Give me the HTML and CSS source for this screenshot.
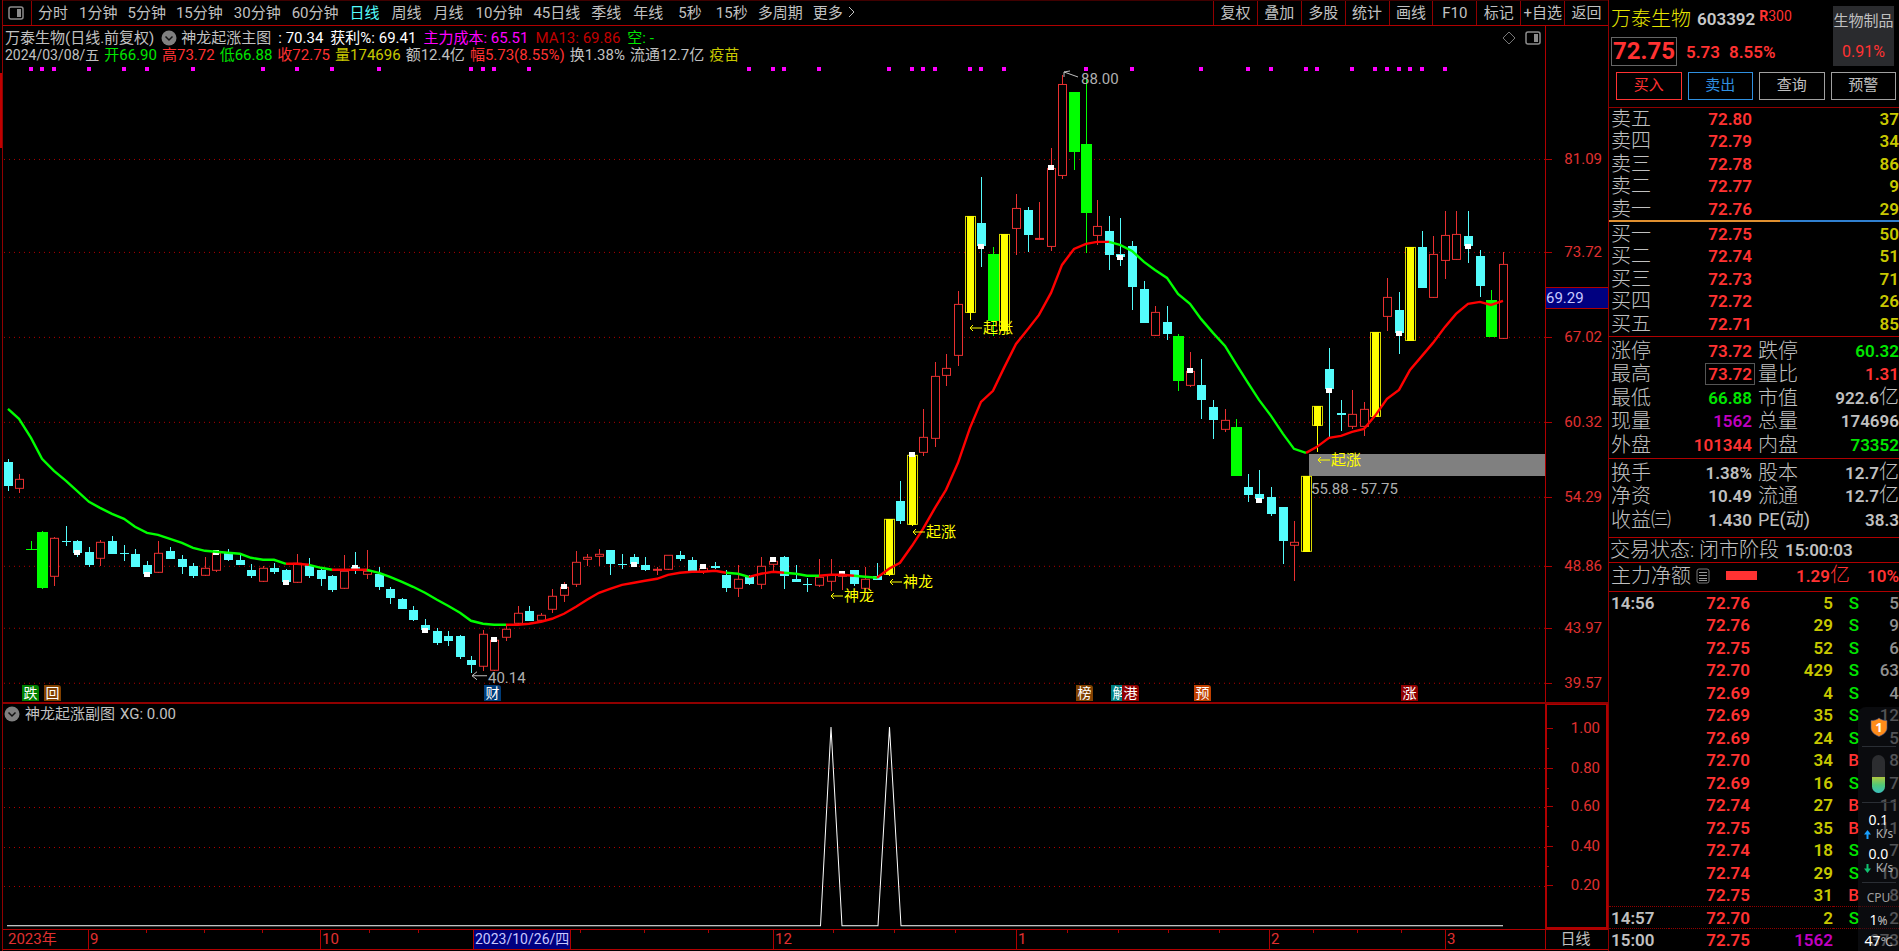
FILE: index.html
```html
<!DOCTYPE html>
<html lang="zh-CN">
<head>
<meta charset="utf-8">
<title>万泰生物 603392</title>
<link rel="stylesheet" href="styles.css">
</head>
<body>
<div class="app">
  <div class="rail"></div>
  <main class="chart">
    <header class="toolbar">
      <button class="menu" aria-label="侧栏"><svg width="16" height="14" viewBox="0 0 16 14"><rect x="1" y="1" width="14" height="12" rx="2" fill="none" stroke="#8c8c8c" stroke-width="1.5"/><rect x="9" y="3" width="4" height="8" fill="#8c8c8c"/></svg></button>
      <nav class="periods">
        <button>分时</button><button class="tight">1分钟</button><button class="tight">5分钟</button><button class="tight">15分钟</button><button>30分钟</button><button class="tight">60分钟</button><button class="active">日线</button><button>周线</button><button>月线</button><button>10分钟</button><button class="tight">45日线</button><button>季线</button><button>年线</button><button class="wide">5秒</button><button class="tight">15秒</button><button class="tight">多周期</button><button class="tight">更多<svg width="8" height="12" viewBox="0 0 8 12"><path d="M1 1L6 6L1 11" fill="none" stroke="#c0c0c0"/></svg></button>
      </nav>
      <nav class="tools">
        <button>复权</button><button>叠加</button><button>多股</button><button>统计</button><button>画线</button><button>F10</button><button>标记</button><button>+自选</button><button>返回</button>
      </nav>
    </header>
    <section class="pane main-pane">
      <div class="plot">
        <svg id="main" viewBox="3 26 1542 676" preserveAspectRatio="none"></svg>
        <div class="info">
          <p><span>万泰生物(日线.前复权)</span><svg class="round" width="16" height="16" viewBox="0 0 16 16"><circle cx="8" cy="8" r="7.5" fill="#808080"/><path d="M4.500 6.500L8 10L11.500 6.500" fill="none" stroke="#111" stroke-width="1.5"/></svg><span class="title">神龙起涨主图</span><span class="white">: 70.34</span><span class="white">获利%: 69.41</span><span class="magenta">主力成本: 65.51</span><span class="darkred">MA13: 69.86</span><span class="green">空: -</span></p>
          <p class="ohlc"><span class="date">2024/03/08/五</span><span class="green">开66.90</span><span class="red">高73.72</span><span class="green">低66.88</span><span class="red">收72.75</span><span class="yellow">量174696</span><span>额12.4亿</span><span class="red">幅5.73(8.55%)</span><span>换1.38%</span><span>流通12.7亿</span><span class="yellow">疫苗</span></p>
        </div>
        <div class="corner">
          <svg width="14" height="14" viewBox="0 0 14 14"><path d="M7 1L13 7L7 13L1 7Z" fill="none" stroke="#777"/></svg>
          <svg width="16" height="14" viewBox="0 0 16 14"><rect x="1" y="1" width="14" height="12" rx="2" fill="none" stroke="#8c8c8c" stroke-width="1.5"/><rect x="9" y="3" width="4" height="8" fill="#8c8c8c"/></svg>
        </div>
        <div class="labels" id="mainLabels"></div>
      </div>
      <div class="axis" id="mainAxis"></div>
    </section>
    <section class="pane sub-pane">
      <div class="plot">
        <svg id="sub" viewBox="3 704 1542 225" preserveAspectRatio="none"></svg>
        <div class="info sub-info"><p><svg class="round" width="16" height="16" viewBox="0 0 16 16"><circle cx="8" cy="8" r="7.5" fill="#808080"/><path d="M4.500 6.500L8 10L11.500 6.500" fill="none" stroke="#111" stroke-width="1.5"/></svg><span>神龙起涨副图</span><span>XG: 0.00</span></p></div>
      </div>
      <div class="axis boxed" id="subAxis"></div>
    </section>
    <footer class="times">
      <div class="timeline" id="timeline"></div>
      <div class="unit">日线</div>
    </footer>
  </main>
  <aside class="quote">
    <header class="head">
      <div class="ident"><h1>万泰生物</h1><b>603392</b><sup><b>R</b>300</sup></div>
      <div class="last"><strong>72.75</strong><span>5.73</span><span>8.55%</span></div>
      <div class="sector"><span>生物制品</span><em>0.91%</em></div>
      <div class="actions"><button class="buy">买入</button><button class="sell">卖出</button><button>查询</button><button>预警</button></div>
    </header>
    <table class="book asks">
      <tr><th>卖五</th><td class="red">72.80</td><td class="yellow">37</td></tr>
      <tr><th>卖四</th><td class="red">72.79</td><td class="yellow">34</td></tr>
      <tr><th>卖三</th><td class="red">72.78</td><td class="yellow">86</td></tr>
      <tr><th>卖二</th><td class="red">72.77</td><td class="yellow">9</td></tr>
      <tr><th>卖一</th><td class="red">72.76</td><td class="yellow">29</td></tr>
    </table>
    <div class="ratio"></div>
    <table class="book bids">
      <tr><th>买一</th><td class="red">72.75</td><td class="yellow">50</td></tr>
      <tr><th>买二</th><td class="red">72.74</td><td class="yellow">51</td></tr>
      <tr><th>买三</th><td class="red">72.73</td><td class="yellow">71</td></tr>
      <tr><th>买四</th><td class="red">72.72</td><td class="yellow">26</td></tr>
      <tr><th>买五</th><td class="red">72.71</td><td class="yellow">85</td></tr>
    </table>
    <table class="stats five">
      <tr><th>涨停</th><td class="red">73.72</td><th>跌停</th><td class="green">60.32</td></tr>
      <tr><th>最高</th><td class="red"><span class="framed">73.72</span></td><th>量比</th><td class="red">1.31</td></tr>
      <tr><th>最低</th><td class="green">66.88</td><th>市值</th><td>922.6<i>亿</i></td></tr>
      <tr><th>现量</th><td class="purple">1562</td><th>总量</th><td>174696</td></tr>
      <tr><th>外盘</th><td class="red">101344</td><th>内盘</th><td class="green">73352</td></tr>
    </table>
    <table class="stats three">
      <tr><th>换手</th><td>1.38%</td><th>股本</th><td>12.7<i>亿</i></td></tr>
      <tr><th>净资</th><td>10.49</td><th>流通</th><td>12.7<i>亿</i></td></tr>
      <tr><th>收益㈢</th><td>1.430</td><th><span class="pe">PE(动)</span></th><td>38.3</td></tr>
    </table>
    <div class="status"><span>交易状态: 闭市阶段</span><b>15:00:03</b></div>
    <div class="net"><span>主力净额</span><svg width="14" height="16" viewBox="0 0 14 16"><rect x="1" y="1" width="12" height="14" rx="2" fill="none" stroke="#777"/><path d="M3 4.500H11M3 7.500H11M3 10.500H11M3 12.500H11" stroke="#999"/></svg><div class="bar"></div><span class="amount red"><b>1.29</b>亿</span><b class="share red">10%</b></div>
    <div class="trades">
      <table>
        <tr><th>14:56</th><td>72.76</td><td>5</td><td class="s">S</td><td>5</td></tr>
        <tr><th></th><td>72.76</td><td>29</td><td class="s">S</td><td>9</td></tr>
        <tr><th></th><td>72.75</td><td>52</td><td class="s">S</td><td>6</td></tr>
        <tr><th></th><td>72.70</td><td>429</td><td class="s">S</td><td>63</td></tr>
        <tr><th></th><td>72.69</td><td>4</td><td class="s">S</td><td>4</td></tr>
        <tr><th></th><td>72.69</td><td>35</td><td class="s">S</td><td>12</td></tr>
        <tr><th></th><td>72.69</td><td>24</td><td class="s">S</td><td>5</td></tr>
        <tr><th></th><td>72.70</td><td>34</td><td class="b">B</td><td>8</td></tr>
        <tr><th></th><td>72.69</td><td>16</td><td class="s">S</td><td>7</td></tr>
        <tr><th></th><td>72.74</td><td>27</td><td class="b">B</td><td>11</td></tr>
        <tr><th></th><td>72.75</td><td>35</td><td class="b">B</td><td>11</td></tr>
        <tr><th></th><td>72.74</td><td>18</td><td class="s">S</td><td>7</td></tr>
        <tr><th></th><td>72.74</td><td>29</td><td class="s">S</td><td>10</td></tr>
        <tr><th></th><td>72.75</td><td>31</td><td class="b">B</td><td>8</td></tr>
        <tr class="minute"><th>14:57</th><td>72.70</td><td>2</td><td class="s">S</td><td>2</td></tr>
        <tr class="minute"><th>15:00</th><td>72.75</td><td class="purple">1562</td><td></td><td>373</td></tr>
      </table>
    </div>
    <div class="monitor">
      <svg class="shield" width="18" height="20" viewBox="0 0 18 20"><path d="M9 1C11 3 14 3.500 17 3.500V11C17 15 13 18 9 19.500C5 18 1 15 1 11V3.500C4 3.500 7 3 9 1Z" fill="#ff8c1a" stroke="#4a5a90" stroke-width=".6"/><text x="9" y="14.500" text-anchor="middle" fill="#fff" font-family="Open Sans" font-size="13" font-weight="bold">1</text></svg>
      <hr>
      <div class="pill"><div></div></div>
      <hr>
      <div class="rate"><b>0.1</b><span><svg width="7" height="9" viewBox="0 0 7 9"><path d="M3.500 0L7 4.500H4.500V9H2.500V4.500H0Z" fill="#18a0ff"/></svg>K/s</span></div>
      <div class="rate"><b>0.0</b><span><svg width="7" height="9" viewBox="0 0 7 9"><path d="M3.500 9L0 4.500H2.500V0H4.500V4.500H7Z" fill="#10c070"/></svg>K/s</span></div>
      <hr>
      <div class="cpu">CPU</div>
      <div class="load">1<small>%</small></div>
      <div class="temp">47<small>℃</small></div>
    </div>
  </aside>
</div>
<script src="chart.js"></script>
</body>
</html>
```
FILE: styles.css
```css
* { box-sizing: border-box; }
body {
  margin: 0;
  height: 100vh;
  overflow: hidden;
  background: #000;
  color: #c0c0c0;
  font: 15px/18px Roboto, "Noto Sans CJK SC", sans-serif;
}
button { margin: 0; padding: 0; border: 0; background: none; color: inherit; font: inherit; cursor: pointer; }
p, h1 { margin: 0; font: inherit; }
.white { color: #fff; }
.magenta { color: #f0f; }
.darkred { color: #c00000; }
.green { color: #00e600; }
.red { color: #ff3232; }
.yellow { color: #c8c800; }
.purple { color: #c000c0; }

.app { display: grid; grid-template-columns: 3px minmax(0, 1fr) 291px; height: 100vh; }
.rail { border-right: 1px solid #900000; background: linear-gradient(#000 73px, #c00000 73px, #c00000 148px, #000 148px); }
.chart { display: flex; flex-direction: column; min-width: 0; padding-bottom: 1px; }

.toolbar { display: flex; flex: none; height: 26px; border-top: 1px solid #400000; border-bottom: 1px solid #b00000; }
.menu { display: flex; align-items: center; width: 29px; padding-left: 5px; border-right: 1px solid #900000; }
.periods { display: flex; flex: 1; white-space: nowrap; }
.periods button { padding: 0 6px; }
.periods .active { color: #54fcfc; }
.periods .wide { padding: 0 9px; }
.periods .tight { padding: 0 5px; }
.periods svg { margin-left: 5px; }
.tools { display: grid; grid-template-columns: repeat(9, 1fr); width: 395px; }
.tools button { border-left: 1px solid #900000; }

.pane { display: grid; grid-template-columns: minmax(0, 1fr) 63px; min-height: 0; }
.main-pane { flex: 678; border-bottom: 2px solid #900000; }
.sub-pane { flex: 226; }
.plot { position: relative; min-height: 0; }
.plot > svg { position: absolute; width: 100%; height: 100%; display: block; }
.axis { position: relative; border-left: 1px solid #b00000; color: #e03030; }
.axis span { position: absolute; right: 6px; transform: translateY(-50%); }
.axis i { position: absolute; left: 0; width: 6px; height: 1px; background: #b00000; }
.axis i.minor { width: 2px; }
.axis .cursor { left: 0; right: 0; padding: 1px 0; border: 1px solid #b00000; border-width: 1px 0; background: #000080; color: #c8c8ff; }
.boxed { border: 2px solid #b00000; border-top-width: 1px; }

.info { position: absolute; left: 2px; top: 3px; white-space: nowrap; }
.info p { display: flex; align-items: center; gap: 7px; height: 17px; }
.info .ohlc { gap: 5px; }
.info .date { font-size: 14px; }
.info .title { margin-left: -3px; }
.sub-info { top: 2px; left: 1px; }
.sub-info p { gap: 5px; }
.corner { position: absolute; top: 5px; right: 4px; display: flex; gap: 9px; align-items: center; }
.labels span { position: absolute; display: flex; align-items: center; transform: translateY(-50%); white-space: nowrap; color: #b0b0b0; }
.labels .signal { color: #ff0; }
.labels .badge { justify-content: center; width: 17px; height: 16px; border-radius: 0 3px 0 0; color: #fff; font-size: 14px; }

.times { display: grid; grid-template-columns: minmax(0, 1fr) 63px; flex: none; height: 21px; border: 1px solid #b00000; border-width: 1px 0; color: #e03030; }
.timeline { position: relative; }
.timeline span { position: absolute; top: 0; bottom: 0; padding-left: 1px; border-left: 1px solid #b00000; white-space: nowrap; }
.timeline .first { border: 0; }
.timeline .cursor { padding: 0 1px; border-right: 1px solid #b00000; background: #000080; color: #c8c8ff; font-size: 14px; }
.timeline i { position: absolute; top: 0; width: 1px; height: 3px; background: #b00000; }
.unit { border-left: 1px solid #b00000; padding-right: 3px; color: #c0c0c0; text-align: center; }

.quote { position: relative; display: flex; flex-direction: column; border-left: 1px solid #900000; font-size: 17px; font-weight: 600; line-height: 20px; min-height: 0; overflow: hidden; }
.head { position: relative; display: flex; flex-direction: column; flex: none; height: 107px; padding: 7px 3px 0 2px; }
.ident { display: flex; align-items: center; gap: 6px; height: 24px; }
.ident h1 { color: #e6e600; font-size: 20px; font-weight: 300; }
.ident > b { color: #c8c8c8; font-weight: 600; }
.ident sup { margin-left: -2px; color: #ff3232; font-size: 14px; font-weight: 400; line-height: 18px; align-self: flex-start; }
.last { display: flex; align-items: center; gap: 9px; margin-top: 6px; color: #ff3232; }
.last strong { height: 29px; padding: 0 1px; border: 1px solid #666; font-size: 24px; font-weight: 700; line-height: 27px; }
.sector { position: absolute; top: 6px; right: 5px; display: flex; flex-direction: column; justify-content: space-between; width: 61px; height: 60px; padding: 5px 0 4px; background: #2a2b2e; font-size: 15px; font-weight: 400; text-align: center; }
.sector em { color: #ff3232; font-size: 16px; font-style: normal; }
.actions { display: grid; grid-template-columns: repeat(4, 1fr); gap: 6px; margin: 6px 0 0 5px; }
.actions button { height: 28px; padding-bottom: 2px; border: 1px solid #a0a0a0; font-size: 15px; font-weight: 400; }
.actions .buy { border-color: #ff3232; color: #ff3232; }
.actions .sell { border-color: #3090e0; color: #3090e0; }

table { width: 100%; border-collapse: collapse; table-layout: fixed; }
th, td { padding: 0; text-align: right; white-space: nowrap; line-height: 20px; overflow: visible; }
th { text-align: left; font-weight: 300; font-size: 20px; }
td i { font-size: 20px; font-style: normal; font-weight: 300; line-height: 18px; }
.book, .stats { flex: none; }
.book tr { height: 22px; }
.book tr:nth-child(even) { height: 23px; }
.book th { width: 80px; padding-left: 2px; }
.book td:nth-child(2) { width: 63px; }
.asks { border-top: 1px solid #900000; }
.bids { margin: 1px 0; }
.ratio { flex: none; height: 2px; background: linear-gradient(90deg, #e09030 59%, #3080d0 59%); }
.stats { padding-top: 2px; border-top: 1px solid #b00000; border-collapse: separate; border-spacing: 0; }
.stats tr { height: 24px; }
.stats tr:nth-child(even) { height: 23px; }
.five { margin-bottom: 1px; }
.three { margin-bottom: 5px; }
.stats th:first-child { width: 67px; padding-left: 2px; }
.stats td:nth-child(2) { width: 76px; }
.stats th:nth-child(3) { width: 50px; padding-left: 6px; }
.framed { display: inline-block; margin-right: -3px; padding: 0 2px; border: 1px solid #555; }
.pe { font-size: 18px; font-weight: 400; }
.status { display: flex; flex: none; align-items: center; gap: 6px; height: 25px; padding-left: 1px; border-top: 1px solid #b00000; font-size: 20px; font-weight: 300; }
.status b { font-size: 17px; font-weight: 600; }
.net { display: flex; flex: none; align-items: center; height: 29px; padding: 0 0 2px 2px; border-top: 1px solid #b00000; font-size: 20px; font-weight: 300; }
.net svg { margin: 0 16px 0 5px; }
.net b { font-size: 17px; font-weight: 600; }
.net .bar { width: 31px; height: 9px; background: #ff3232; }
.net .amount { margin-left: auto; }
.net .share { width: 49px; text-align: right; }
.trades { flex: 1; min-height: 0; border-top: 1px solid #b00000; }
.trades tr { height: 22px; }
.trades tr:nth-child(even) { height: 23px; }
.trades th { width: 60px; padding-left: 2px; font-size: 17px; font-weight: 600; }
.trades td:nth-child(2) { width: 81px; color: #ff3232; }
.trades td:nth-child(3) { width: 83px; color: #c8c800; }
.trades td:nth-child(4) { width: 26px; font-weight: 500; }
.trades td:nth-child(5) { color: #909090; font-weight: 500; }
.trades td.purple { color: #c000c0; }
.trades .s { color: #00e600; }
.trades .b { color: #ff3232; }
.minute { border-top: 1px dotted #900000; }

.monitor { position: absolute; right: 0; bottom: 0; display: flex; flex-direction: column; align-items: center; width: 41px; height: 244px; padding-top: 10px; border-radius: 8px 0 0 0; background: rgba(20, 22, 27, .5); color: #fff; font: 14px/16px "Noto Sans", sans-serif; }
.monitor hr { width: 34px; margin: 9px 0 8px; border: 0; border-top: 1px solid #2a2e34; }
.monitor b { font-weight: 400; }
.pill { display: flex; align-items: flex-end; width: 13px; height: 38px; border-radius: 7px; background: #2c2d30; overflow: hidden; flex: none; }
.pill div { width: 100%; height: 16px; background: linear-gradient(#b0c840, #50c878, #38c0c0); }
.rate { display: flex; flex-direction: column; align-items: center; height: 34px; }
.rate b { line-height: 18px; }
.rate span { display: flex; align-items: center; gap: 5px; color: #b0b0b0; font-size: 12px; line-height: 10px; }
.rate + hr { margin: 3px 0 7px; }
.cpu { color: #a0a0a0; font-size: 12px; }
.load { margin-top: 6px; }
.monitor small { font-size: 12px; color: #c0c0c0; }
.temp { margin-top: 4px; }
```
FILE: chart.js
```js
// Candle rows: [type, high, bodyTop, bodyBottom, low, marker?]
// c = falling, r = rising, g = limit-down signal, y = limit-up signal
const candles = [
['c',459,462,486,491],['r',474,479,489,493],['g',541,549,550,550],['g',531,532,588,589],['r',537,538,577,586],
['c',526,541,542,546],['c',540,541,553,557,552],['c',547,552,565,567],['r',540,542,559,566],['c',536,541,554,554],
['c',545,553,554,561],['c',549,554,567,567],['c',561,565,574,574,574],['r',541,553,573,573],['c',547,551,559,559],
['c',555,559,567,574],['c',563,566,576,578],['r',557,568,576,576],['r',552,553,571,572,552],['c',549,553,560,561],
['c',555,560,565,565],['c',564,570,576,578],['r',566,568,582,582],['c',563,568,572,574],['c',569,570,582,583,582],
['r',554,563,583,583],['c',558,565,576,578],['c',568,570,579,586],['c',575,576,590,592],['r',555,571,589,589],
['c',552,567,569,574,567],['r',550,571,575,579],['c',567,574,587,590],['c',587,589,598,604],['c',598,599,609,609],
['c',606,610,620,621],['c',619,625,630,630,630],['c',628,631,643,645],['c',631,636,641,646],['c',635,636,657,659],
['c',656,660,665,673],['r',630,634,667,671],['r',638,640,671,671,639],['r',626,629,638,641],['r',606,613,624,624],
['c',606,611,621,621],['r',613,615,621,621],['r',589,596,610,613],['r',582,587,596,602,586],['r',551,562,585,587],
['r',554,557,560,566],['r',549,554,557,566],['c',550,550,564,575],['c',554,564,565,569],['c',554,557,564,567,564],
['c',557,565,570,571],['r',567,569,571,575],['r',555,555,570,570],['c',551,555,559,561],['c',557,560,571,571],
['r',566,568,572,574,566],['c',562,566,568,569],['c',570,575,588,592],['r',565,579,589,597],['c',575,577,584,585],
['r',557,566,585,589],['r',559,561,565,572,559],['c',556,557,576,589],['c',565,579,582,582],['c',578,584,585,592],
['r',559,577,586,587],['r',559,575,582,591],['r',573,575,577,590,573],['c',570,570,584,586],['r',567,579,589,589],
['c',563,576,580,580],['y',519,519,575,576],['c',481,501,521,524],['y',454,455,525,526,454],['r',409,437,453,456],
['r',362,376,439,447],['r',354,368,376,386],['r',291,304,356,366],['y',216,216,313,320],['c',177,223,246,267,246],
['g',247,254,321,336],['y',234,234,331,331],['r',194,208,229,255],['c',207,210,235,252],['r',202,238,240,240],
['r',148,168,247,251,167],['r',75,84,176,179],['g',92,92,152,170],['g',79,144,213,253],['r',200,226,236,245],
['c',216,231,255,270],['c',218,254,257,266,257],['c',241,246,287,310],['c',281,289,323,323],['r',306,312,336,336],
['c',306,322,334,340],['g',334,336,381,391],['r',352,371,386,387,370],['c',359,385,400,419],['c',400,407,420,439],
['r',409,420,430,432],['g',419,427,476,476],['c',474,487,495,502],['c',470,494,499,503,500],['c',487,497,514,516],
['c',507,507,541,564],['r',521,542,546,581],['y',476,476,552,552],['y',406,406,426,452],['c',348,369,389,437,390],
['c',400,413,415,431],['r',390,414,427,429],['r',402,409,427,436],['y',332,332,417,417],['r',278,297,317,331],
['c',292,310,333,354,333],['y',247,247,341,341],['c',231,247,288,288],['r',236,254,298,298],['r',211,235,261,279],
['r',211,234,260,260],['c',211,236,246,263,246],['c',250,256,286,297],['g',290,300,337,337],['r',252,264,339,339]
];
const average = [409,419,438,459,471,481,491,502,508,514,519,527,533,535,539,543,548,551,552,553,554,558,560,560,564,
564,565,568,570,570,570,570,573,577,582,587,593,600,606,613,621,624,625,625,625,624,622,619,614,607,600,593,589,585,583,
581,579,575,573,572,572,571,573,574,577,574,572,573,574,576,576,575,575,576,577,578,569,563,546,529,508,490,463,428,402,
391,368,344,329,315,293,265,249,244,242,242,245,251,262,270,278,294,304,319,333,346,364,383,400,416,434,449,453,447,438,
436,432,429,416,399,390,370,356,343,327,314,304,302,305,301];
const rising = [[24,26],[28,31],[43,62],[64,67],[70,73],[75,95],[112,129]];
const dots = [2,3,4,7,10,12,16,22,25,28,32,40,41,42,45,64,66,67,70,76,78,79,80,83,84,86,93,97,103,107,109,112,113,116,118,119,120,121,122,124];
const cyan = '#54fcfc', red = '#e83030', green = '#00ff00', yellow = '#ffff00';
const xAt = i => Math.round(7.7 + 11.59 * i);
const rect = (x, y, w, h, fill) => `<rect x="${x}" y="${y}" width="${w}" height="${h}" fill="${fill}"/>`;
const frame = (x, y, w, h, stroke) => `<rect x="${x + .5}" y="${y + .5}" width="${w - 1}" height="${h - 1}" fill="#000" stroke="${stroke}"/>`;
const gridLine = y => `<line x1="4" x2="1545" y1="${y + .5}" y2="${y + .5}" stroke="#b00000" stroke-dasharray="1 4"/>`;

let out = '<g shape-rendering="crispEdges">';
const levels = [[159,'81.09'],[252,'73.72'],[337,'67.02'],[422,'60.32'],[497,'54.29'],[566,'48.86'],[628,'43.97'],[683,'39.57']];
levels.forEach(([y]) => out += gridLine(y));
out += rect(1309, 454, 236, 22, '#808080');
dots.forEach(i => out += rect(xAt(i) - 2, 67, 4, 4, '#ff00ff'));
candles.forEach(([type, hi, top, bottom, lo, mark], i) => {
  const x = xAt(i), h = Math.max(bottom - top, 1), wick = { c: cyan, r: red, g: green, y: yellow }[type];
  out += rect(x, hi, 1, lo - hi, wick);
  if (type === 'c') out += rect(x - 4, top, 9, h, cyan);
  if (type === 'r') out += frame(x - 4, top, 9, Math.max(h, 2), red);
  if (type === 'g') out += rect(x - 5, top, 11, h, green);
  if (type === 'y') out += frame(x - 5, top, 11, h, '#d8d800') + rect(x - 3, top, 7, h, yellow);
  if (mark) out += rect(x - 3, mark - 2, 6, 5, '#fff');
});
out += '</g>';
const isRising = i => rising.some(([a, b]) => i > a && i <= b);
let start = 0;
for (let i = 1; i < average.length; i++) {
  if (i === average.length - 1 || isRising(i + 1) !== isRising(i)) {
    const pts = [];
    for (let k = start; k <= i; k++) pts.push(xAt(k) + ',' + average[k]);
    out += `<polyline points="${pts.join(' ')}" fill="none" stroke="${isRising(i) ? '#ff0000' : green}" stroke-width="2.4"/>`;
    start = i;
  }
}
out += '<path d="M1078 77L1064 72M1064 77V72L1070 71M487 676H472M477 672L472 676L477 680" fill="none" stroke="#c0c0c0"/>';
document.getElementById('main').innerHTML = out;

const arrow = '<svg width="14" height="8" viewBox="0 0 14 8"><path d="M13 4H1M4 1L1 4L4 7" fill="none" stroke="#ff0"/></svg>';
const place = (x, y) => `left:${(x - 3) / 15.42}%;top:${(y - 26) / 6.76}%`;
let labels = '';
[[830,596,'神龙'],[889,582,'神龙'],[912,532,'起涨'],[969,328,'起涨'],[1317,460,'起涨']].forEach(([x, y, t]) => labels += `<span class="signal" style="${place(x, y)}">${arrow}${t}</span>`);
[[1081,79,'88.00'],[488,678,'40.14'],[1311,489,'55.88 - 57.75']].forEach(([x, y, t]) => labels += `<span style="${place(x, y)}">${t}</span>`);
[[22,'跌','#008000'],[44,'回','#804000'],[484,'财','#003c78'],[1076,'榜','#804000'],[1111,'解','#008080'],[1122,'港','#900000'],[1194,'预','#c04000'],[1401,'涨','#900000']].forEach(([x, t, c]) => labels += `<span class="badge" style="${place(x, 693)};background:${c}">${t}</span>`);
document.getElementById('mainLabels').innerHTML = labels;

document.getElementById('mainAxis').innerHTML = levels.map(([y, t]) => {
  const top = (y - 26) / 6.76;
  return `<i style="top:${top}%"></i><span style="top:${top}%">${t}</span>`;
}).join('') + `<span class="cursor" style="top:${(298 - 26) / 6.76}%">69.29</span>`;

const subLevels = [[728,'1.00'],[768,'0.80'],[807,'0.60'],[847,'0.40'],[886,'0.20']];
document.getElementById('sub').innerHTML = '<g shape-rendering="crispEdges">' + subLevels.slice(1).map(([y]) => gridLine(y)).join('') + '</g>' +
  '<path d="M7 925.5H820.500L831 727L842 925.500H878L889.500 727L901 925.500H1503" fill="none" stroke="#fff"/>';
document.getElementById('subAxis').innerHTML = subLevels.map(([y, t], i) => {
  const top = (y - 704) / 2.25;
  const minor = i < 4 ? `<i class="minor" style="top:${top + 8.8}%"></i>` : '';
  return `<i style="top:${top}%"></i>${minor}<span style="top:${top}%">${t}</span>`;
}).join('');

const at = x => `left:${(x - 3) / 15.42}%`;
document.getElementById('timeline').innerHTML =
  [146,204,262,369,418,580,644,708,833,894,955,1067,1118,1168,1219,1313,1357,1401].map(x => `<i style="${at(x)}"></i>`).join('') +
  [[7,'2023年','first'],[88,'9',''],[320,'10',''],[773,'12',''],[1016,'1',''],[1269,'2',''],[1445,'3',''],[473,'2023/10/26/四','cursor']].map(([x, t, c]) => `<span class="${c}" style="${at(x)}">${t}</span>`).join('');
```
